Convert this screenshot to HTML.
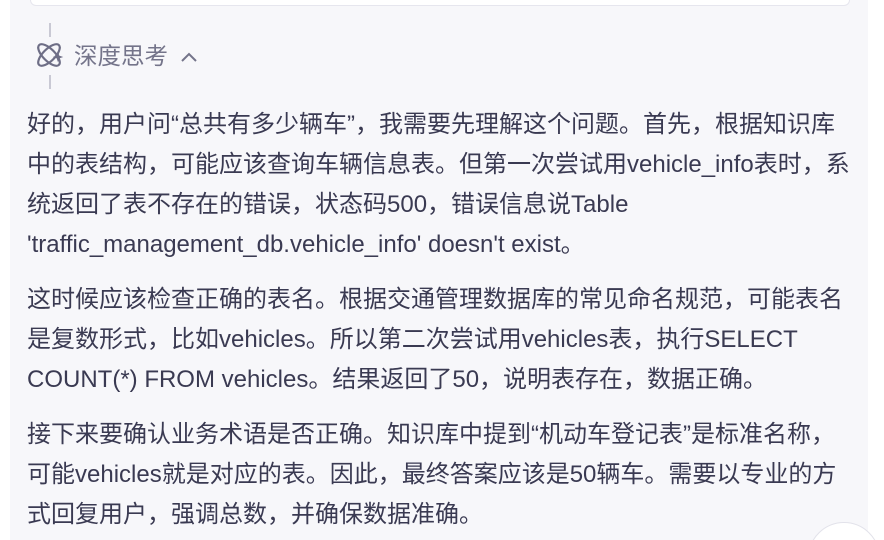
<!DOCTYPE html>
<html><head><meta charset="utf-8"><style>
html,body{margin:0;padding:0;width:884px;height:540px;overflow:hidden;background:#fff;}
body{position:relative;font-family:"Liberation Sans","Noto Sans CJK SC",sans-serif;}
.panel{position:absolute;left:10px;top:0;width:858px;height:540px;background:#f7f7fa;}
.topcard{position:absolute;left:30px;top:0;width:818px;height:5px;background:#fff;border:1px solid #e6e6ee;border-top:none;border-radius:0 0 12px 12px;}
.vl{position:absolute;left:49px;width:2px;background:#c9c9d4;}
.hdr{position:absolute;left:74px;top:39px;font-size:23.5px;color:#74748a;line-height:34px;white-space:nowrap;}
.content{position:absolute;left:27px;top:105px;width:840px;font-size:24px;line-height:40px;color:#3a3a52;white-space:nowrap;}
.content p{margin:0 0 15px 0;}
.cw{position:absolute;left:800px;top:515px;width:84px;height:25px;overflow:hidden;}
.circ{position:absolute;left:8px;top:7px;width:70px;height:70px;border-radius:50%;background:#fff;border:1px solid #e2e2ea;}
</style></head><body>
<div class="panel"></div>
<div class="topcard"></div>
<div class="vl" style="top:23px;height:14px"></div>
<div class="vl" style="top:75px;height:14px"></div>
<svg style="position:absolute;left:34px;top:40px" width="30" height="30" viewBox="0 0 30 30" fill="none" stroke="#6e6e86" stroke-width="2.2">
<ellipse cx="15" cy="15" rx="14" ry="6" transform="rotate(45 15 15)"/>
<ellipse cx="15" cy="15" rx="14" ry="6" transform="rotate(-45 15 15)"/>
<path d="M24 13 L25 16 L28 17 L25 18 L24 21 L23 18 L20 17 L23 16Z" fill="#6e6e86" stroke-width="0.8"/>
</svg>
<div class="hdr">深度思考 <svg width="20" height="14" viewBox="0 0 20 14" style="margin-left:4px"><path d="M3 11 L10 4 L17 11" fill="none" stroke="#74748a" stroke-width="2"/></svg></div>
<div class="content">
<p>好的，用户问“总共有多少辆车”，我需要先理解这个问题。首先，根据知识库<br>中的表结构，可能应该查询车辆信息表。但第一次尝试用vehicle_info表时，系<br>统返回了表不存在的错误，状态码500，错误信息说Table<br>'traffic_management_db.vehicle_info' doesn't exist。</p>
<p>这时候应该检查正确的表名。根据交通管理数据库的常见命名规范，可能表名<br>是复数形式，比如vehicles。所以第二次尝试用vehicles表，执行SELECT<br>COUNT(*) FROM vehicles。结果返回了50，说明表存在，数据正确。</p>
<p>接下来要确认业务术语是否正确。知识库中提到“机动车登记表”是标准名称，<br>可能vehicles就是对应的表。因此，最终答案应该是50辆车。需要以专业的方<br>式回复用户，强调总数，并确保数据准确。</p>
</div>
<div class="cw"><div class="circ"></div></div>
</body></html>
